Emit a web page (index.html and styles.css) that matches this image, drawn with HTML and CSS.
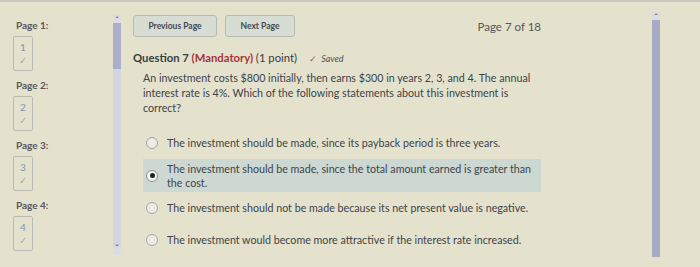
FILE: index.html
```html
<!DOCTYPE html>
<html>
<head>
<meta charset="utf-8">
<link rel="stylesheet" href="styles.css">
</head>
<body>
<div class="app">
  <aside class="sidebar">
    <div class="pages">
      <div class="page-label">Page 1:</div>
      <div class="page-box"><span class="num">1</span><span class="chk">&#10003;</span></div>
      <div class="page-label">Page 2:</div>
      <div class="page-box"><span class="num">2</span><span class="chk">&#10003;</span></div>
      <div class="page-label">Page 3:</div>
      <div class="page-box"><span class="num">3</span><span class="chk">&#10003;</span></div>
      <div class="page-label">Page 4:</div>
      <div class="page-box"><span class="num">4</span><span class="chk">&#10003;</span></div>
    </div>
    <div class="scroll left-scroll">
      <div class="arrow">&#710;</div>
      <div class="thumb short"></div>
      <div class="track"></div>
      <div class="arrow down">&#711;</div>
    </div>
  </aside>
  <main class="main">
    <div class="topbar">
      <div class="nav">
        <button class="btn prev">Previous Page</button>
        <button class="btn next">Next Page</button>
      </div>
      <div class="pageno">Page 7 of 18</div>
    </div>
    <div class="qhead">
      <span class="qtitle">Question 7 <span class="mand">(Mandatory)</span> <span class="pts">(1 point)</span></span>
      <span class="saved"><span class="savechk">&#10003;</span> Saved</span>
    </div>
    <p class="qtext">An investment costs $800 initially, then earns $300 in years 2, 3, and 4. The annual interest rate is 4%. Which of the following statements about this investment is correct?</p>
    <div class="options">
      <div class="opt"><span class="radio"></span><span class="otext">The investment should be made, since its payback period is three years.</span></div>
      <div class="opt sel"><span class="radio on"></span><span class="otext">The investment should be made, since the total amount earned is greater than the cost.</span></div>
      <div class="opt"><span class="radio"></span><span class="otext">The investment should not be made because its net present value is negative.</span></div>
      <div class="opt"><span class="radio"></span><span class="otext">The investment would become more attractive if the interest rate increased.</span></div>
    </div>
  </main>
  <div class="rightcol">
    <div class="scroll right-scroll">
      <div class="arrow">&#710;</div>
      <div class="thumb full"></div>
    </div>
  </div>
</div>
</body>
</html>
```

FILE: styles.css
```css
* { box-sizing: border-box; }
html, body { margin: 0; padding: 0; }
body {
  background: #e4e2cd;
  font-family: Lato, "Open Sans", sans-serif;
  color: #3c3f44;
  width: 700px;
  height: 267px;
  overflow: hidden;
  border-top: 2px solid #c9c8bc;
}
.app {
  display: flex;
  height: 265px;
}
.sidebar {
  width: 122px;
  display: flex;
}
.pages {
  width: 113px;
  padding: 17px 0 0 13px;
}
.page-label {
  font-size: 10px;
  font-weight: 700;
  color: #55585c;
  height: 17px;
  padding-left: 3px;
}
.page-box {
  width: 20px;
  height: 35px;
  border: 1px solid #b9bab4;
  border-radius: 2px;
  display: flex;
  flex-direction: column;
  align-items: center;
  padding-top: 4px;
  margin-bottom: 8px;
}
.num {
  font-size: 10px;
  color: #8393b8;
  line-height: 12px;
}
.chk {
  font-size: 10px;
  color: #a8abab;
  line-height: 14px;
}
.scroll {
  width: 8px;
  display: flex;
  flex-direction: column;
  align-items: stretch;
  background: #d8dade;
}
.left-scroll {
  margin-top: 13px;
  height: 240px;
}
.arrow {
  height: 8px;
  font-size: 9px;
  line-height: 11px;
  text-align: center;
  color: #555;
  background: #dcdde0;
}
.arrow.down { line-height: 4px; }
.thumb { background: #a9aecb; }
.thumb.short { height: 46px; }
.track { flex: 1; background: #d3d6de; }
.main {
  width: 530px;
  padding: 13px 0 0 11px;
}
.topbar {
  width: 408px;
  height: 22px;
  display: flex;
  justify-content: space-between;
  align-items: center;
}
.nav {
  display: flex;
  gap: 8px;
}
.btn {
  height: 22px;
  border: 1px solid #b3bcb4;
  border-radius: 3px;
  background: #d8ddd4;
  font-family: Lato, sans-serif;
  font-size: 8.5px;
  font-weight: 700;
  color: #45484c;
  padding: 0;
}
.btn.prev { width: 84px; }
.btn.next { width: 70px; }
.pageno {
  font-size: 11.5px;
  color: #54575b;
  padding-top: 1px;
}
.qhead {
  margin-top: 14px;
  display: flex;
  align-items: baseline;
  gap: 12px;
}
.qtitle {
  font-size: 11.3px;
  font-weight: 700;
  color: #3a3d42;
}
.qtitle .mand { color: #a8323a; }
.qtitle .pts { font-weight: 400; }
.saved {
  font-size: 9px;
  font-style: italic;
  color: #4e5155;
}
.savechk { font-style: normal; color: #6a6d70; margin-right: 2px; }
.qtext {
  margin: 6px 0 0 10px;
  width: 398px;
  font-size: 10.7px;
  line-height: 15px;
  color: #404348;
}
.options {
  margin-top: 12px;
  width: 408px;
  padding-left: 10px;
}
.opt {
  display: flex;
  align-items: center;
  min-height: 32px;
  padding: 0 6px 0 3px;
}
.opt.sel {
  background: #cdd8d2;
  min-height: 33px;
  align-items: center;
}
.radio {
  flex: none;
  width: 12px;
  height: 12px;
  border: 1px solid #a1a6a5;
  border-radius: 50%;
  background: #ecece6;
  margin-right: 9px;
  display: flex;
  align-items: center;
  justify-content: center;
}
.radio.on { background: #f4f4f0; border-color: #8a9090; }
.radio.on::after {
  content: "";
  width: 5px;
  height: 5px;
  border-radius: 50%;
  background: #1e2024;
}
.otext {
  font-size: 10.7px;
  line-height: 13.5px;
  color: #404348;
}
.rightcol {
  flex: 1;
  padding-left: 0;
}
.right-scroll {
  margin-top: 10px;
  height: 245px;
}
.thumb.full { flex: 1; background: #a5aac6; }
```
